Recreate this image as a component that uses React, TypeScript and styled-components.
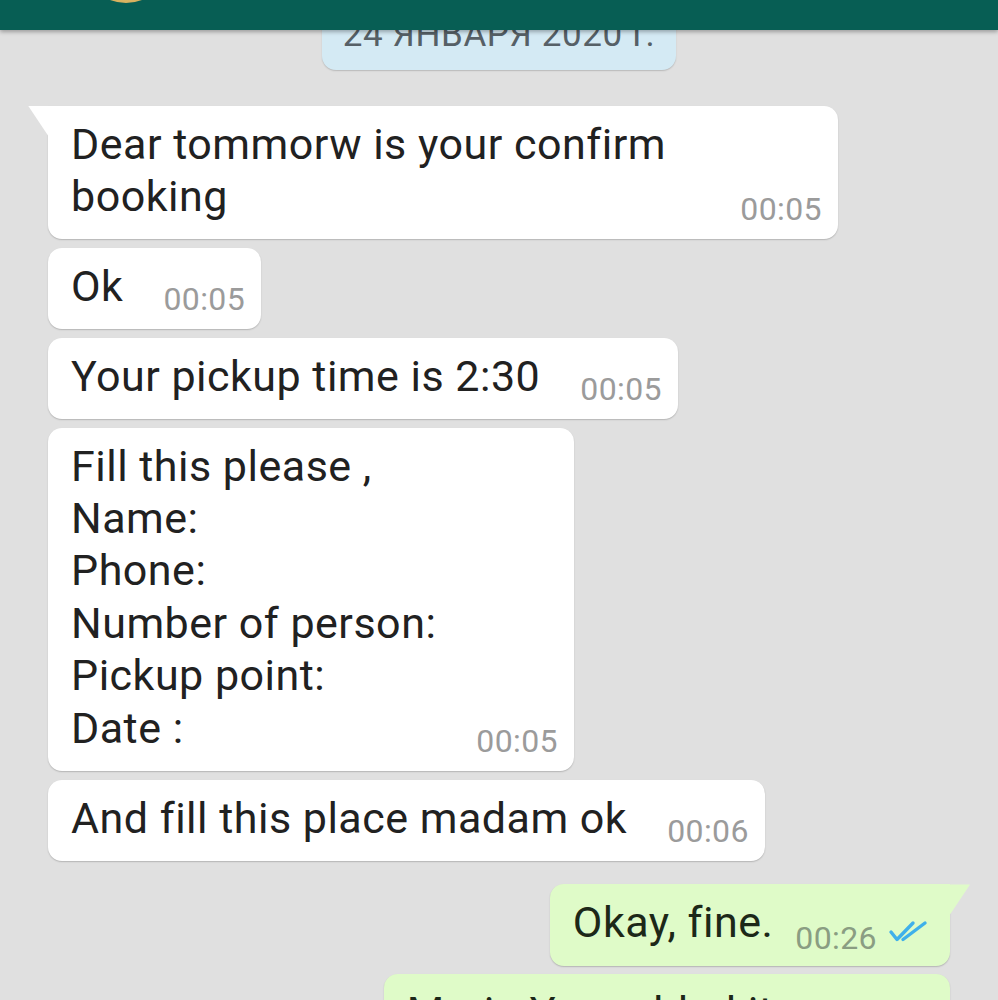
import React from "react";
import styled, { createGlobalStyle } from "styled-components";

const Global = createGlobalStyle`
  html, body { margin: 0; padding: 0; background: #e0e0e0; }
  body { font-family: Roboto, "Noto Sans", "Liberation Sans", sans-serif; }
  * { box-sizing: border-box; }
`;

const Page = styled.div`
  position: relative;
  width: 998px;
  height: 1000px;
  overflow: hidden;
  background: #e0e0e0;
`;

const AppBar = styled.header`
  position: absolute;
  top: 0;
  left: 0;
  right: 0;
  height: 30px;
  z-index: 2;
  display: flex;
  align-items: flex-end;
  padding-left: 82px;
  overflow: hidden;
  background: #075e54;
  box-shadow: 0 2px 4px rgba(0, 0, 0, 0.3);
`;

const Avatar = styled.div`
  flex: none;
  width: 88px;
  height: 88px;
  margin-bottom: 27px;
  border-radius: 50%;
  background: radial-gradient(circle at 50% 70%, #f0d68a 0%, #c99b45 55%, #6d4f22 100%);
`;

const Messages = styled.main`
  display: flex;
  flex-direction: column;
  gap: 8.5px;
  padding: 1px 48px 0;
`;

const DateChip = styled.div`
  align-self: center;
  margin-bottom: 12px;
  padding: 14px 21px 15px;
  border-radius: 14px;
  background: #d4eaf4;
  color: #566066;
  font-size: 35px;
  letter-spacing: 0.6px;
  line-height: 40px;
  white-space: nowrap;
  box-shadow: 0 1px 1.5px rgba(0, 0, 0, 0.18);
`;

const Bubble = styled.div<{ $out?: boolean; $tail?: boolean }>`
  position: relative;
  align-self: ${(p) => (p.$out ? "flex-end" : "flex-start")};
  max-width: 790px;
  display: flex;
  align-items: flex-end;
  gap: ${(p) => (p.$out ? "22px" : "40px")};
  margin-top: ${(p) => (p.$tail ? "15px" : "0")};
  padding: ${(p) => (p.$out ? "12px 20px 17px 23px" : "12px 16px 17px 23px")};
  border-radius: 14px;
  border-top-left-radius: ${(p) => (p.$tail && !p.$out ? "0" : "14px")};
  border-top-right-radius: ${(p) => (p.$tail && p.$out ? "0" : "14px")};
  background: ${(p) => (p.$out ? "#dffbc8" : "#ffffff")};
  box-shadow: 0 1px 1.5px rgba(0, 0, 0, 0.2);

  &::before {
    content: "";
    display: ${(p) => (p.$tail ? "block" : "none")};
    position: absolute;
    top: 0;
    width: 20px;
    height: 30px;
    background: inherit;
    ${(p) =>
      p.$out
        ? "right: -20px; clip-path: polygon(0 0, 100% 0, 0 100%);"
        : "left: -20px; clip-path: polygon(0 0, 100% 0, 100% 100%);"}
  }
`;

const Text = styled.div<{ $out?: boolean }>`
  min-width: 0;
  white-space: pre-wrap;
  font-size: 43px;
  letter-spacing: 0.5px;
  line-height: 52.4px;
  color: ${(p) => (p.$out ? "#1c2818" : "#212121")};
`;

const Meta = styled.div<{ $out?: boolean }>`
  flex: none;
  display: flex;
  align-items: flex-end;
  gap: 11px;
  margin-bottom: ${(p) => (p.$out ? "-2px" : "0")};
`;

const Time = styled.span<{ $out?: boolean }>`
  font-size: 32px;
  letter-spacing: 0.4px;
  line-height: 25px;
  color: ${(p) => (p.$out ? "#8a9d82" : "#9b9b9b")};
`;

const Ticks = styled.svg`
  flex: none;
  width: 42px;
  height: 22px;
  margin-bottom: 9px;
`;

type Msg = { text: string; time: string; out?: boolean; tail?: boolean };

const messages: Msg[] = [
  { text: "Dear tommorw is your confirm booking", time: "00:05", tail: true },
  { text: "Ok", time: "00:05" },
  { text: "Your pickup time is 2:30", time: "00:05" },
  {
    text: "Fill this please ,\nName:\nPhone:\nNumber of person:\nPickup point:\nDate :",
    time: "00:05",
  },
  { text: "And fill this place madam ok", time: "00:06" },
  { text: "Okay, fine.", time: "00:26", out: true, tail: true },
  { text: "Maria You added it", time: "00:26", out: true },
];

const DoubleTick = () => (
  <Ticks
    viewBox="0 0 42 22"
    fill="none"
    stroke="#3fb0ea"
    strokeWidth={3.4}
    strokeLinecap="round"
    strokeLinejoin="round"
  >
    <path d="M3 12 L9 19.5 L25 3" />
    <path d="M15 19.5 L37 3" />
  </Ticks>
);

export default function App() {
  return (
    <Page>
      <Global />
      <AppBar>
        <Avatar />
      </AppBar>
      <Messages>
        <DateChip>24 ЯНВАРЯ 2020 Г.</DateChip>
        {messages.map((m, i) => (
          <Bubble key={i} $out={m.out} $tail={m.tail}>
            <Text $out={m.out}>{m.text}</Text>
            <Meta $out={m.out}>
              <Time $out={m.out}>{m.time}</Time>
              {m.out && <DoubleTick />}
            </Meta>
          </Bubble>
        ))}
      </Messages>
    </Page>
  );
}
